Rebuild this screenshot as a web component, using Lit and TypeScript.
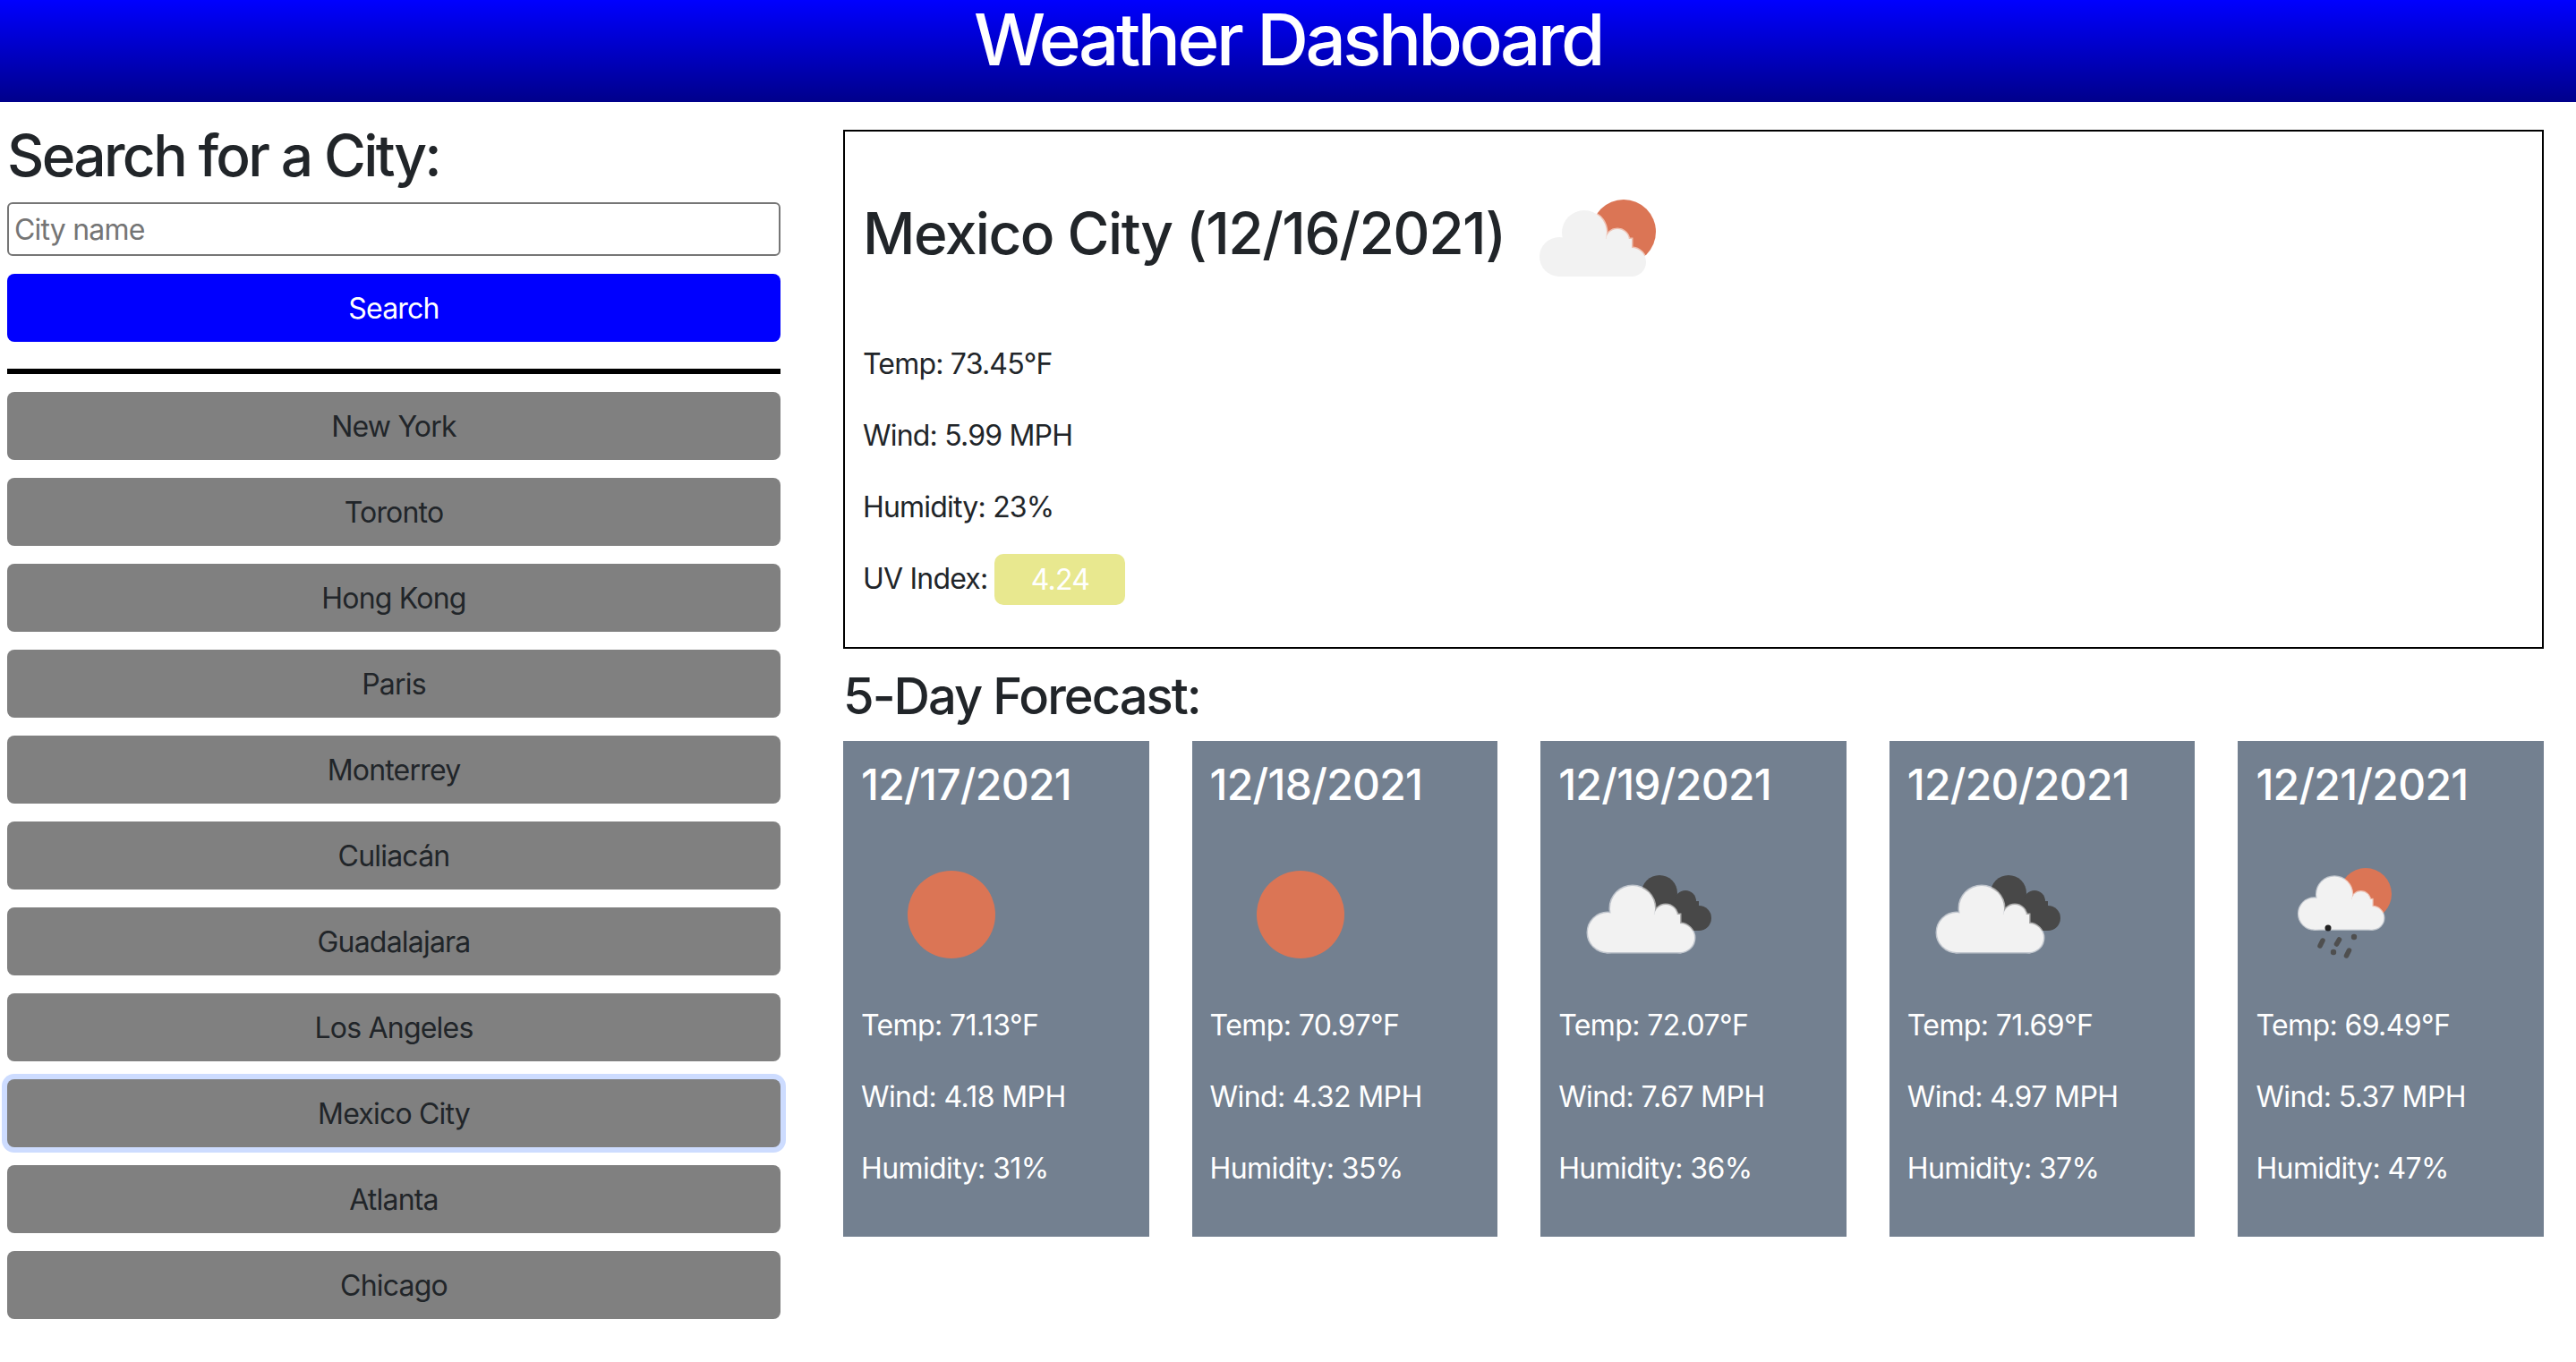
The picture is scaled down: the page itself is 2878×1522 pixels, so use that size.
import { LitElement, html, svg, css } from "lit";
import { customElement } from "lit/decorators.js";

const CITIES = [
  "New York",
  "Toronto",
  "Hong Kong",
  "Paris",
  "Monterrey",
  "Culiacán",
  "Guadalajara",
  "Los Angeles",
  "Mexico City",
  "Atlanta",
  "Chicago",
];

const FORECAST = [
  { date: "12/17/2021", icon: "clear", temp: "71.13", wind: "4.18", humidity: 31 },
  { date: "12/18/2021", icon: "clear", temp: "70.97", wind: "4.32", humidity: 35 },
  { date: "12/19/2021", icon: "overcast", temp: "72.07", wind: "7.67", humidity: 36 },
  { date: "12/20/2021", icon: "overcast", temp: "71.69", wind: "4.97", humidity: 37 },
  { date: "12/21/2021", icon: "rain", temp: "69.49", wind: "5.37", humidity: 47 },
];

const SUN = "#db7555";
const CLOUD = "#f2f2f2";
const DARK = "#484848";

// cloud made of four lobes and a base, a pale halo is drawn behind it
const cloudShapes = (fill: string, extra = 0) => svg`
  <g fill=${fill} stroke=${extra ? fill : "none"} stroke-width=${extra}>
    <circle cx="54" cy="120" r="22" />
    <circle cx="82" cy="93" r="25" />
    <circle cx="119" cy="102" r="13" />
    <circle cx="135" cy="126" r="16" />
    <rect x="54" y="100" width="81" height="42" />
  </g>
`;

const cloud = () => svg`
  <g opacity="0.55">${cloudShapes("#fff", 3)}</g>
  ${cloudShapes(CLOUD)}
`;

const icons: Record<string, () => unknown> = {
  clear: () => svg`<circle cx="100" cy="100" r="49" fill=${SUN} />`,
  partly: () => svg`
    <g transform="translate(3 0)">
      <circle cx="126" cy="92" r="36" fill=${SUN} />
      ${cloud()}
    </g>
  `,
  overcast: () => svg`
    <g fill=${DARK}>
      <circle cx="112" cy="76" r="20" />
      <circle cx="141" cy="85" r="12" />
      <circle cx="156" cy="104" r="14" />
      <rect x="110" y="85" width="46" height="33" />
    </g>
    ${cloud()}
  `,
  rain: () => svg`
    <circle cx="122" cy="77" r="29" fill=${SUN} />
    <g transform="translate(21.5 3) scale(0.8)">${cloud()}</g>
    <circle cx="80" cy="115" r="3.5" fill="#222" />
    <g stroke="#4f4f4f" stroke-width="5.5" stroke-linecap="round">
      <line x1="74" y1="129" x2="71" y2="135" />
      <line x1="92.5" y1="128" x2="89.5" y2="133" />
      <line x1="103.5" y1="140" x2="100.5" y2="146" />
    </g>
    <g fill="#4f4f4f">
      <circle cx="109" cy="125" r="3.2" />
      <circle cx="86" cy="142" r="3.2" />
    </g>
  `,
};

const weatherIcon = (name: string) => html`
  <svg class="icon" viewBox="0 0 200 200" aria-hidden="true">
    ${icons[name]()}
  </svg>
`;

@customElement("app-root")
export class AppRoot extends LitElement {
  override render() {
    return html`
      <header><h1>Weather Dashboard</h1></header>
      <div class="page">
        <aside>
          <h2>Search for a City:</h2>
          <input type="text" placeholder="City name" />
          <button class="search">Search</button>
          <hr />
          ${CITIES.map(
            (city) => html`
              <button class="city ${city === "Mexico City" ? "focused" : ""}">
                ${city}
              </button>
            `
          )}
        </aside>
        <main>
          <section class="current">
            <h2>Mexico City (12/16/2021) ${weatherIcon("partly")}</h2>
            <p>Temp: 73.45°F</p>
            <p>Wind: 5.99 MPH</p>
            <p>Humidity: 23%</p>
            <p class="uv-row">UV Index: <span class="uv">4.24</span></p>
          </section>
          <h3>5-Day Forecast:</h3>
          <div class="cards">
            ${FORECAST.map(
              (day) => html`
                <article>
                  <h4>${day.date}</h4>
                  ${weatherIcon(day.icon)}
                  <p>Temp: ${day.temp}°F</p>
                  <p>Wind: ${day.wind} MPH</p>
                  <p>Humidity: ${day.humidity}%</p>
                </article>
              `
            )}
          </div>
        </main>
      </div>
    `;
  }

  static styles = css`
    * {
      box-sizing: border-box;
      margin: 0;
    }

    :host {
      display: block;
      font-family: Inter, "Liberation Sans", sans-serif;
      font-size: 32px;
      line-height: 48px;
      letter-spacing: -0.8px;
      color: #212529;
      background: #fff;
    }

    header {
      display: flow-root;
      height: 114px;
      background: linear-gradient(#0000ff, #00008b);
      color: #fff;
      text-align: center;
    }

    h1,
    h2,
    h3,
    h4 {
      font-weight: 500;
      line-height: 1.2;
    }

    h1 {
      font-size: 80px;
      letter-spacing: -3.5px;
      margin-top: -4px;
    }

    h2 {
      font-size: 64px;
      letter-spacing: -2.65px;
    }

    h3 {
      font-size: 56px;
      letter-spacing: -1.95px;
      margin-bottom: 16px;
    }

    h4 {
      font-size: 48px;
      letter-spacing: -0.75px;
      margin-bottom: 16px;
    }

    p {
      margin-bottom: 32px;
    }

    .page {
      display: flex;
      align-items: flex-start;
    }

    aside {
      width: 864px;
      margin: 22px 0 0 8px;
      display: flex;
      flex-direction: column;
    }

    aside h2 {
      margin-bottom: 13px;
    }

    input {
      height: 60px;
      padding: 2px 6px 0;
      border: 2px solid #767676;
      border-radius: 6px;
      font: inherit;
      letter-spacing: inherit;
      color: #212529;
      background: #fff;
    }

    input::placeholder {
      color: #757575;
    }

    button {
      height: 76px;
      margin-top: 20px;
      padding: 2px 0 0;
      border: 0;
      border-radius: 8px;
      font: inherit;
      letter-spacing: inherit;
      text-align: center;
    }

    .search {
      background: #0000ff;
      color: #fff;
    }

    hr {
      height: 6px;
      margin-top: 30px;
      margin-bottom: 0;
      border: 0;
      background: #000;
    }

    .city {
      background: #808080;
      color: #212529;
    }

    .city.focused {
      box-shadow: 0 0 0 6px #cddcff;
    }

    main {
      width: 1900px;
      margin: 31px 0 0 70px;
    }

    .current {
      border: 2px solid #000;
      padding: 20px;
      margin-bottom: 20px;
    }

    .current h2 {
      margin-bottom: 16px;
      letter-spacing: -1.5px;
    }

    .current h2 .icon {
      margin-left: -12px;
    }

    .icon {
      width: 200px;
      height: 200px;
      vertical-align: middle;
    }

    article .icon {
      display: block;
      margin-left: 1px;
    }

    article p {
      letter-spacing: -0.6px;
    }

    .uv-row {
      display: flex;
      align-items: center;
      gap: 8px;
      height: 48px;
    }

    .uv {
      flex: none;
      width: 146px;
      height: 57px;
      line-height: 57px;
      border-radius: 10px;
      background: #e8e88f;
      color: #fff;
      text-align: center;
    }

    .cards {
      display: flex;
      gap: 48px;
    }

    article {
      flex: 1;
      padding: 20px;
      background: #738090;
      color: #fff;
    }
  `;
}
